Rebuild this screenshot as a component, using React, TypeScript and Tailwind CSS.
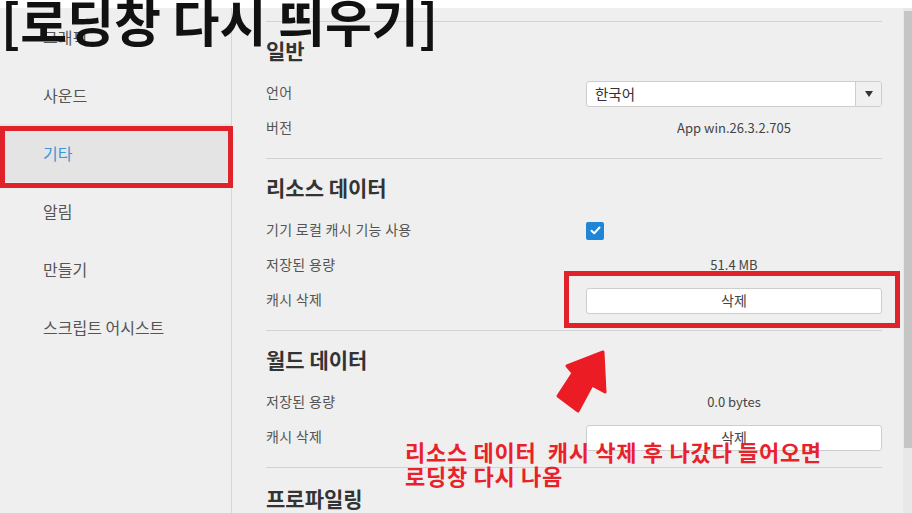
import React from "react";

const menu = ["그래픽", "사운드", "기타", "알림", "만들기", "스크립트 어시스트"];

const Row = ({ label, children }: { label: string; children?: React.ReactNode }) => (
  <div className="grid grid-cols-[320px_1fr] h-[35px] items-center">
    <span className="text-[14px] tracking-[0.3px] text-[#555] -mt-[2px]">{label}</span>
    <div className="flex items-center">{children}</div>
  </div>
);

const Value = ({ text }: { text: string }) => (
  <span className="w-full text-center text-[13px] text-[#444] -mt-[2px]">{text}</span>
);

const DeleteButton = () => (
  <button className="w-full h-[26px] bg-white border border-[#cdcdcd] rounded-[3px] text-[14px] text-[#444]">
    삭제
  </button>
);

const Section = ({ title, children }: { title: string; children: React.ReactNode }) => (
  <section className="border-t border-[#d3d3d3] pb-[12px]">
    <h2 className="pt-[17px] pb-[15px] text-[21px] leading-[22px] font-bold text-[#333]">{title}</h2>
    {children}
  </section>
);

export default function App() {
  return (
    <div className="relative w-[912px] h-[513px] overflow-hidden bg-white font-['Noto_Sans_CJK_KR',sans-serif]">
      <div className="h-2 bg-white" />
      <div className="flex h-[505px] bg-[#efefef]">
        {/* Sidebar */}
        <aside className="w-[232px] border-r border-[#d6d6d6]">
          {menu.map((m) => (
            <div
              key={m}
              className={`h-[58px] flex items-center pl-[43px] text-[16px] ${
                m === "기타" ? "bg-[#e4e4e4] text-[#3a98d6]" : "text-[#555]"
              }`}
            >
              {m}
            </div>
          ))}
        </aside>

        {/* Settings */}
        <main className="flex-1 pt-[13px] pl-[34px] pr-[21px] overflow-hidden">
          <Section title="일반">
            <Row label="언어">
              <div className="w-full h-[26px] flex bg-white border border-[#cdcdcd] rounded-[3px] overflow-hidden">
                <span className="flex-1 pl-[8px] text-[14.5px] leading-[23px] text-[#333]">한국어</span>
                <span className="w-[26px] flex items-center justify-center border-l border-[#cdcdcd] bg-[#f0f0f0]">
                  <svg width="8" height="6" viewBox="0 0 8 6">
                    <path d="M0 0 H8 L4 6 Z" fill="#333" />
                  </svg>
                </span>
              </div>
            </Row>
            <Row label="버전">
              <Value text="App win.26.3.2.705" />
            </Row>
          </Section>

          <Section title="리소스 데이터">
            <Row label="기기 로컬 캐시 기능 사용">
              <span className="w-[18px] h-[18px] rounded-[2px] bg-[#1f85d6] flex items-center justify-center">
                <svg width="11" height="9" viewBox="0 0 11 9" fill="none">
                  <path d="M1.5 4.8 L4.2 7.3 L9.5 1.5" stroke="white" strokeWidth="2" strokeLinecap="round" strokeLinejoin="round" />
                </svg>
              </span>
            </Row>
            <Row label="저장된 용량">
              <Value text="51.4 MB" />
            </Row>
            <Row label="캐시 삭제">
              <DeleteButton />
            </Row>
          </Section>

          <Section title="월드 데이터">
            <Row label="저장된 용량">
              <Value text="0.0 bytes" />
            </Row>
            <Row label="캐시 삭제">
              <DeleteButton />
            </Row>
          </Section>

          <section className="border-t border-[#d3d3d3]">
            <h2 className="pt-[19px] text-[21px] leading-[22px] font-bold text-[#333]">프로파일링</h2>
          </section>
        </main>

        {/* Scrollbar */}
        <div className="w-[9px] bg-[#e8e8e8] pt-[3px]">
          <div className="ml-px w-[8px] h-[437px] bg-[#c5c5c5]" />
        </div>
      </div>

      {/* Annotations */}
      <div className="absolute left-[1px] top-[-5px] text-[51px] leading-none font-bold text-[#111]">
        [로딩창 다시 띄우기]
      </div>
      <div className="absolute left-0 top-[126px] w-[233px] h-[62px] border-[5px] border-[#e0222b]" />
      <div className="absolute left-[564px] top-[271px] w-[336px] h-[57px] border-[5px] border-[#e0222b]" />
      <svg className="absolute left-[550px] top-[345px]" width="65" height="75" viewBox="0 0 65 75">
        <path
          d="M53 7 L55 47 L42 40 L28 66 L8 51 L23 28 L17 21 Z"
          fill="#ec1c24"
          stroke="#ec1c24"
          strokeWidth="3"
          strokeLinejoin="round"
        />
      </svg>
      <div className="absolute left-[405px] top-[439px] text-[22px] leading-[24px] font-bold tracking-[0.7px] text-[#e8212b] whitespace-pre">
        {"리소스 데이터  캐시 삭제 후 나갔다 들어오면\n로딩창 다시 나옴"}
      </div>
    </div>
  );
}
